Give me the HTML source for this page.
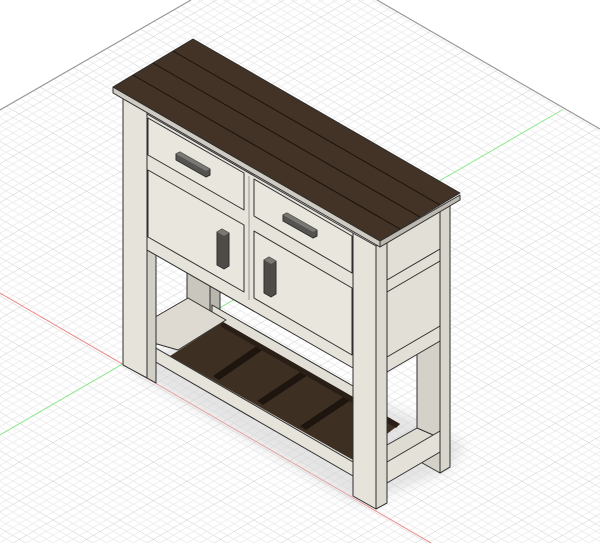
<!DOCTYPE html>
<html><head><meta charset="utf-8"><style>html,body{margin:0;padding:0;background:#fff;width:600px;height:543px;overflow:hidden}svg{display:block}</style></head>
<body>
<svg width="600" height="543" viewBox="0 0 600 543" xmlns="http://www.w3.org/2000/svg">
<defs>
<pattern id="g1" width="20" height="33.5" patternUnits="userSpaceOnUse" patternTransform="translate(120,365) rotate(30)">
<line x1="0" y1="6.7" x2="20" y2="6.7" stroke="#ebebeb" stroke-width="0.8"/>
<line x1="0" y1="13.4" x2="20" y2="13.4" stroke="#ebebeb" stroke-width="0.8"/>
<line x1="0" y1="20.1" x2="20" y2="20.1" stroke="#ebebeb" stroke-width="0.8"/>
<line x1="0" y1="26.8" x2="20" y2="26.8" stroke="#ebebeb" stroke-width="0.8"/>
<line x1="0" y1="0" x2="20" y2="0" stroke="#d0d0d0" stroke-width="1"/>
</pattern>
<pattern id="g2" width="20" height="33.5" patternUnits="userSpaceOnUse" patternTransform="translate(120,365) rotate(-30)">
<line x1="0" y1="6.7" x2="20" y2="6.7" stroke="#ebebeb" stroke-width="0.8"/>
<line x1="0" y1="13.4" x2="20" y2="13.4" stroke="#ebebeb" stroke-width="0.8"/>
<line x1="0" y1="20.1" x2="20" y2="20.1" stroke="#ebebeb" stroke-width="0.8"/>
<line x1="0" y1="26.8" x2="20" y2="26.8" stroke="#ebebeb" stroke-width="0.8"/>
<line x1="0" y1="0" x2="20" y2="0" stroke="#d0d0d0" stroke-width="1"/>
</pattern>
<clipPath id="cp"><polygon points="0,110 191,0 377,0 600,129 600,543 0,543"/></clipPath>
<filter id="bl" x="-20%" y="-20%" width="140%" height="140%"><feGaussianBlur stdDeviation="6"/></filter>
</defs>
<g clip-path="url(#cp)">
<rect width="600" height="543" fill="url(#g1)"/>
<rect width="600" height="543" fill="url(#g2)"/>
</g>
<polyline points="0,110 191,0" stroke="#9a9a9a" stroke-width="1.2" fill="none"/>
<polyline points="377,0 600,129" stroke="#9a9a9a" stroke-width="1.2" fill="none"/>
<line x1="0" y1="293" x2="600" y2="641" stroke="#f08a8a" stroke-width="1"/>
<line x1="0" y1="435" x2="562" y2="110" stroke="#8ee88e" stroke-width="1"/>
<!-- shadow -->
<polygon points="130,370 360,505 450,470 465,445 420,420 200,330" fill="#cfcfcf" opacity="0.55" filter="url(#bl)"/>
<g stroke="#2e2e2e" stroke-width="1" stroke-linejoin="round">
<!-- back right leg -->
<polygon points="417,300 440,313 440,473 417,460" fill="#d4d1c8"/>
<polygon points="440,313 450,307 450,467 440,473" fill="#c8c5bb"/>
<!-- back left leg -->
<polygon points="187,262 210,275 210,312 187,300" fill="#c9c6bd"/>
<polygon points="210,275 220,270 220,318 210,312" fill="#b9b6ad"/>
<!-- back lower rail -->
<polygon points="212,305 353,386 353,398 212,317" fill="#e2dfd6"/>
<!-- left shelf end -->
<polygon points="150,320 188,298 226,320 178,350 150,342" fill="#dedad1"/>
</g>
<!-- slats -->
<polygon points="170,356 223,322 400,424 353,460" fill="#3e2f23"/>
<polygon points="213,376 258,345 264,349 219,380" fill="#1e150e"/>
<polygon points="257,401 302,371 308,375 263,405" fill="#1e150e"/>
<polygon points="300,426 345,396 351,400 306,430" fill="#1e150e"/>
<polygon points="223,322 400,424 396,428 220,326" fill="#2a1f16"/>
<g stroke="#2e2e2e" stroke-width="1" stroke-linejoin="round">
<!-- right side shelf -->
<polygon points="387,445 417,428 440,438 387,466" fill="#dedbd2"/>
<polygon points="387,462 440,431 440,452 387,483" fill="#e4e1d8"/>
<!-- front lower rail -->
<polygon points="147,343 353,462 353,476 147,357" fill="#e6e3da"/>
<!-- left leg inner strip -->
<polygon points="147,250 156,255 156,383 147,378" fill="#d2cfc6"/>
<!-- front apron -->
<polygon points="147,114 353,233 353,368 147,250" fill="#e6e3da"/>
<!-- drawers -->
<polygon points="148,118 244,173 244,210 148,155" fill="#e9e6de"/>
<polygon points="254,179 352,236 352,273 254,216" fill="#e9e6de"/>
<polygon points="148,170 244,225 244,292 148,237" fill="#e9e6de"/>
<polygon points="254,231 352,288 352,355 254,298" fill="#e9e6de"/>
<line x1="249" y1="176" x2="249" y2="300" stroke="#888" stroke-width="0.8"/>
<!-- handles -->
<polygon points="176,154 180,152 210,169 210,175 206,177 176,160" fill="#55534f"/>
<polygon points="176,154 180,152 210,169 206,171" fill="#7a7874" stroke="none"/>
<polygon points="283,215 287,213 317,230 317,236 313,238 283,221" fill="#55534f"/>
<polygon points="283,215 287,213 317,230 313,232" fill="#7a7874" stroke="none"/>
<polygon points="217,232 222,229 229,233 229,266 224,269 217,265" fill="#4e4c48"/>
<polygon points="217,232 222,229 229,233 224,236" fill="#7a7874" stroke="none"/>
<polygon points="264,260 269,257 276,261 276,294 271,297 264,293" fill="#4e4c48"/>
<polygon points="264,260 269,257 276,261 271,264" fill="#7a7874" stroke="none"/>
<!-- left leg -->
<polygon points="123,96 147,110 147,378 123,365" fill="#e6e3da"/>
<!-- front right leg -->
<polygon points="353,233 376,246 376,509 353,496" fill="#e6e3da"/>
<polygon points="376,246 387,240 387,503 376,509" fill="#dcd9d0"/>
<!-- side apron -->
<polygon points="387,240 440,209 440,341 387,372" fill="#e2dfd6"/>
<polyline points="387,280 440,249" fill="none"/>
<polyline points="387,292 440,261" fill="none"/>
<polyline points="387,357 440,326" fill="none"/>
<polygon points="440,209 450,203 450,467 440,473" fill="#d8d5cc"/>
<!-- top board -->
<polygon points="113,87 380,241 380,247 113,93" fill="#cfcbc2"/>
<polygon points="380,241 460,195 460,200 380,247" fill="#bdb9b0"/>
<polygon points="113,87 193,39 460,193 380,241" fill="#433326"/>
<line x1="133" y1="75" x2="400" y2="229" stroke="#1a120c"/>
<line x1="153" y1="63" x2="420" y2="217" stroke="#1a120c"/>
<line x1="173" y1="51" x2="440" y2="205" stroke="#1a120c"/>
</g>
</svg>
</body></html>
